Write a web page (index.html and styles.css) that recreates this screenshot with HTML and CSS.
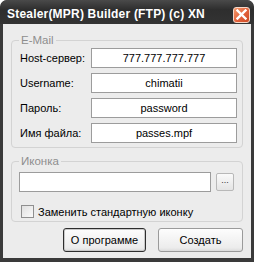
FILE: index.html
```html
<!DOCTYPE html>
<html>
<head>
<meta charset="utf-8">
<link rel="stylesheet" href="styles.css">
</head>
<body>
<div class="window">
  <div class="titlebar">
    <span class="title">Stealer(MPR) Builder (FTP) (c) XN</span>
    <span class="close">
      <svg width="11" height="11" viewBox="0 0 11 11"><path d="M1.5 1.5 L9.5 9.5 M9.5 1.5 L1.5 9.5" stroke="#fff" stroke-width="2.4" stroke-linecap="square"/></svg>
    </span>
  </div>
  <div class="content">
    <div class="group group-mail">
      <span class="group-title">E-Mail</span>
      <div class="row"><label class="lbl">Host-сервер:</label><div class="field">777.777.777.777</div></div>
      <div class="row"><label class="lbl">Username:</label><div class="field">chimatii</div></div>
      <div class="row"><label class="lbl">Пароль:</label><div class="field">password</div></div>
      <div class="row"><label class="lbl">Имя файла:</label><div class="field">passes.mpf</div></div>
    </div>
    <div class="group group-icon">
      <span class="group-title">Иконка</span>
      <div class="icon-row">
        <div class="field wide"></div>
        <div class="browse">...</div>
      </div>
      <div class="check-row">
        <span class="checkbox"></span>
        <span class="check-label">Заменить стандартную иконку</span>
      </div>
    </div>
    <div class="buttons">
      <div class="btn btn-default">О программе</div>
      <div class="btn btn-create">Создать</div>
    </div>
  </div>
</div>
</body>
</html>
```
FILE: styles.css
```css
html, body {
  margin: 0;
  padding: 0;
  background: #ffffff;
}
.window {
  width: 254px;
  height: 262px;
  box-sizing: border-box;
  background: #3a3a3a;
  border-radius: 7px 7px 0 0;
  padding: 0 3px 4px 3px;
  display: flex;
  flex-direction: column;
  font-family: "Liberation Sans", Arial, sans-serif;
  font-size: 11px;
  color: #000;
  overflow: hidden;
}
.titlebar {
  height: 24px;
  flex: none;
  display: flex;
  align-items: center;
  justify-content: space-between;
  background: linear-gradient(#4a4a4a, #2e2e2e 40%, #333333);
  margin: 0 -3px;
  padding-left: 7px;
  padding-right: 4px;
  border-radius: 7px 7px 0 0;
}
.title {
  color: #ffffff;
  font-weight: bold;
  font-size: 12px;
  letter-spacing: 0.2px;
  padding-top: 3px;
}
.close {
  width: 17px;
  height: 16px;
  box-sizing: border-box;
  margin-top: 5px;
  border: 1px solid #f6d8c8;
  border-radius: 3px;
  background: linear-gradient(135deg, #f49a6c, #e2603a 55%, #cc4a24);
  display: flex;
  align-items: center;
  justify-content: center;
}
.content {
  flex: 1;
  background: #ececec;
  display: flex;
  flex-direction: column;
  padding: 16px 8px 0 8px;
}
.group {
  position: relative;
  border: 1px solid #d3d3d3;
  border-radius: 4px;
}
.group-title {
  position: absolute;
  top: -8px;
  left: 7px;
  padding: 0 2px;
  background: #ececec;
  color: #8e8e8e;
  line-height: 14px;
  font-size: 11.5px;
}
.group-mail {
  padding: 7px 5px 4px 8px;
  display: flex;
  flex-direction: column;
  gap: 5px;
}
.row {
  display: flex;
  align-items: center;
}
.lbl {
  width: 71px;
  flex: none;
}
.field {
  flex: 1;
  height: 20px;
  box-sizing: border-box;
  border: 1px solid #9c9c9c;
  background: #ffffff;
  text-align: center;
  line-height: 18px;
}
.group-icon {
  margin-top: 13px;
  padding: 10px 8px 3px 7px;
}
.icon-row {
  display: flex;
  align-items: center;
  gap: 5px;
}
.browse {
  width: 18px;
  height: 18px;
  box-sizing: border-box;
  border: 1px solid #b8b8b8;
  border-radius: 2px;
  background: linear-gradient(#fafafa, #e4e4e4);
  font-size: 9px;
  line-height: 13px;
  text-align: center;
  color: #333;
}
.check-row {
  display: flex;
  align-items: center;
  margin-top: 13px;
  gap: 4px;
  padding-left: 2px;
}
.checkbox {
  width: 13px;
  height: 13px;
  box-sizing: border-box;
  border: 1px solid #8f8f8f;
  background: linear-gradient(135deg, #e0e0e0, #fafafa);
}
.buttons {
  display: flex;
  justify-content: flex-end;
  gap: 12px;
  margin-top: 6px;
}
.btn {
  height: 24px;
  box-sizing: border-box;
  border-radius: 3px;
  background: linear-gradient(#fdfdfd, #ececec 85%, #dcdcdc);
  display: flex;
  align-items: center;
  justify-content: center;
}
.btn-default {
  width: 83px;
  border: 1px solid #2e2e2e;
  box-shadow: inset 0 0 0 1px #c8c8c8;
}
.btn-create {
  width: 85px;
  border: 1px solid #9a9a9a;
}
```
